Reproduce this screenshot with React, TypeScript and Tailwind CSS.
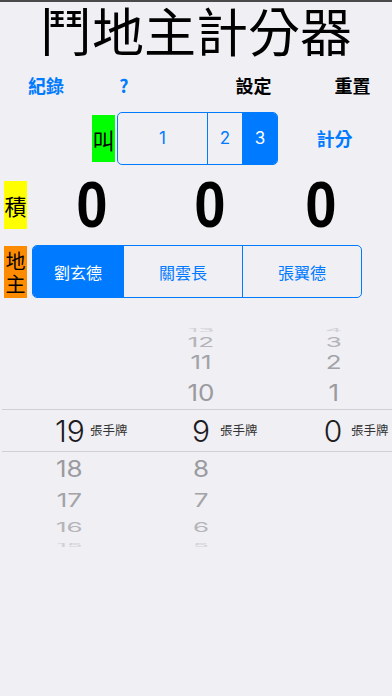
import React from 'react'

const cjk = "font-['Noto_Sans_CJK_TC',sans-serif]"
const ui = "font-['Inter','Noto_Sans_CJK_TC',sans-serif]"

const upperRows = [
  { h: 'h-[12px]', cls: 'scale-y-[0.2] text-[#d2d2d6]', c: ['', '13', '4'] },
  { h: 'h-[18px]', cls: 'scale-y-[0.53] text-[#b4b4b9]', c: ['', '12', '3'] },
  { h: 'h-[29px]', cls: 'scale-y-[0.74] text-[#a3a3a8]', c: ['', '11', '2'] },
  { h: 'h-[33px]', cls: 'scale-y-[0.88] text-[#9a9a9f]', c: ['', '10', '1'] },
]

const lowerRows = [
  { h: 'h-[34px]', cls: 'scale-y-[0.88] text-[#9a9a9f]', c: ['18', '8', ''] },
  { h: 'h-[28px]', cls: 'scale-y-[0.74] text-[#a3a3a8]', c: ['17', '7', ''] },
  { h: 'h-[18px]', cls: 'scale-y-[0.53] text-[#b4b4b9]', c: ['16', '6', ''] },
  { h: 'h-[11px]', cls: 'scale-y-[0.2] text-[#d2d2d6]', c: ['15', '5', ''] },
]

const colPad = ['pl-[8px]', 'pl-[10px]', 'pl-[14px]']

function PickerRow({ h, cls, c }: { h: string; cls: string; c: string[] }) {
  return (
    <div className={`grid grid-cols-3 items-center ${h}`}>
      {c.map((v, i) => (
        <div key={i} className={`flex justify-center ${colPad[i]}`}>
          <span className={`block text-[26px] leading-none ${cls}`}>{v}</span>
        </div>
      ))}
    </div>
  )
}

export default function App() {
  const players = ['劉玄德', '關雲長', '張翼德']
  const selected = ['19', '9', '0']

  return (
    <div className={`min-h-[696px] w-[392px] bg-[#efeff4] ${ui}`}>
      <div className="h-[2px] bg-[#4a4a4a]" />

      {/* Title */}
      <h1 className={`text-center text-[52px] font-normal leading-[56px] text-black ${cjk}`}>
        鬥地主計分器
      </h1>

      {/* Nav */}
      <div className={`mt-[15px] flex h-[24px] items-center text-[18px] font-bold leading-none ${cjk}`}>
        <button className="w-[92px] text-center text-[#007aff]">紀錄</button>
        <button className="w-[64px] text-center text-[#007aff]">?</button>
        <button className="ml-[60px] w-[75px] text-center text-black">設定</button>
        <button className="ml-[24px] w-[75px] text-center text-black">重置</button>
      </div>

      {/* 叫 */}
      <div className="mt-[15px] flex h-[53px] items-center">
        <div className={`ml-[92px] flex h-[47px] w-[23px] items-center justify-center bg-[#00ff00] text-[22px] leading-none text-black ${cjk}`}>
          叫
        </div>
        <div className="ml-[2px] flex h-[53px] w-[161px] overflow-hidden rounded-[5px] border border-[#007aff] text-[17px] text-[#007aff]">
          <div className="flex w-[89px] items-center justify-center">1</div>
          <div className="flex w-[35px] items-center justify-center border-l border-[#007aff]">2</div>
          <div className="flex flex-1 items-center justify-center border-l border-[#007aff] bg-[#007aff] text-white">3</div>
        </div>
        <button className={`w-[113px] text-center text-[18px] font-semibold text-[#007aff] ${cjk}`}>計分</button>
      </div>

      {/* 積 */}
      <div className="mt-[16px] flex h-[48px] items-center">
        <div className={`ml-[4px] flex h-[48px] w-[23px] items-center justify-center bg-[#ffff00] text-[22px] leading-none text-black ${cjk}`}>
          積
        </div>
        {['w-[129px]', 'w-[108px]', 'w-[114px]'].map((w, i) => (
          <div key={i} className={`flex justify-center ${w}`}>
            <span className="block scale-x-[0.88] font-['Liberation_Sans',sans-serif] text-[64px] font-bold leading-none text-black">
              0
            </span>
          </div>
        ))}
      </div>

      {/* 地主 */}
      <div className="mt-[16px] flex h-[53px] items-center">
        <div className={`ml-[4px] flex h-[52px] w-[23px] flex-col items-center justify-center bg-[#ff8c00] text-[20px] leading-[23px] text-black ${cjk}`}>
          <span>地</span>
          <span>主</span>
        </div>
        <div className={`ml-[5px] flex h-[53px] w-[330px] overflow-hidden rounded-[5px] border border-[#007aff] text-[16px] text-[#007aff] ${cjk}`}>
          {players.map((p, i) => (
            <div
              key={p}
              className={`flex items-center justify-center ${
                i === 0
                  ? 'w-[90px] bg-[#007aff] text-white'
                  : i === 1
                    ? 'w-[119px] border-l border-[#007aff]'
                    : 'flex-1 border-l border-[#007aff]'
              }`}
            >
              {p}
            </div>
          ))}
        </div>
      </div>

      {/* Picker */}
      <div className="mt-[19px]">
        {upperRows.map((r, i) => (
          <PickerRow key={i} {...r} />
        ))}
        <div className="relative ml-[2px] grid h-[43px] grid-cols-3 items-center border-y border-[#cfcfd4]">
          {selected.map((v, i) => (
            <div key={i} className={`flex justify-center ${i === 0 ? 'pl-[6px]' : i === 1 ? 'pl-[8px]' : 'pl-[12px]'}`}>
              <span className="block text-[30px] font-light leading-none text-[#1c1c1e]">{v}</span>
            </div>
          ))}
          <span className={`absolute left-[88px] top-[14px] text-[12.5px] leading-none text-[#333] ${cjk}`}>張手牌</span>
          <span className={`absolute left-[218px] top-[14px] text-[12.5px] leading-none text-[#333] ${cjk}`}>張手牌</span>
          <span className={`absolute left-[349px] top-[14px] text-[12.5px] leading-none text-[#333] ${cjk}`}>張手牌</span>
        </div>
        {lowerRows.map((r, i) => (
          <PickerRow key={i} {...r} />
        ))}
      </div>
    </div>
  )
}
